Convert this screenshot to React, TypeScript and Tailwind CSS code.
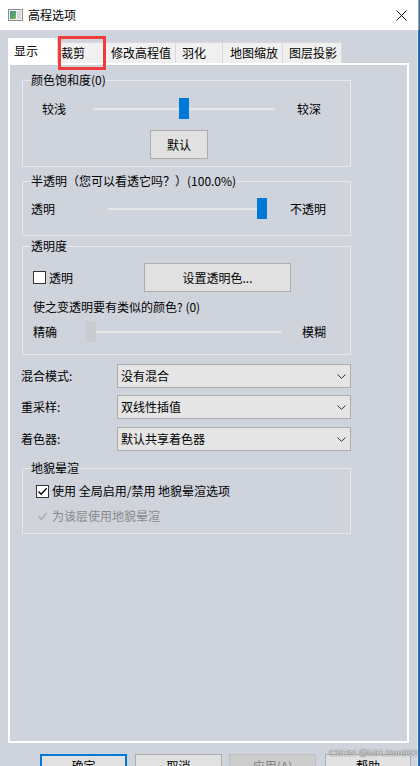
import React from "react";

function Check({ color = "#000" }: { color?: string }) {
  return (
    <svg width="11" height="11" viewBox="0 0 11 11">
      <polyline points="1.5,5.5 4.2,8.3 9.6,2.3" fill="none" stroke={color} strokeWidth="1.3" />
    </svg>
  );
}

function Chevron() {
  return (
    <svg width="9" height="5" viewBox="0 0 9 5">
      <polyline points="0.5,0.5 4.5,4.3 8.5,0.5" fill="none" stroke="#333" strokeWidth="1" />
    </svg>
  );
}

function Combo({ label, value, mt }: { label: string; value: string; mt: string }) {
  return (
    <div className={`flex items-center h-[24px] -ml-[1px] ${mt}`}>
      <div className="w-[96px] leading-[16px]">{label}</div>
      <div className="w-[234px] h-[24px] border border-[#adadad] bg-[#e5e5e5] flex items-center pl-[3px] pr-[4px]">
        <span className="flex-1 leading-[16px]">{value}</span>
        <Chevron />
      </div>
    </div>
  );
}

export default function App() {
  return (
    <div className="w-[420px] h-[766px] overflow-hidden relative flex bg-[#cfd3dc] text-[12px] text-black font-['Noto_Sans_CJK_SC','Microsoft_YaHei',sans-serif]">
      <div className="w-[417px] flex flex-col">
        {/* Title bar */}
        <div className="h-[30px] bg-white flex items-center shrink-0">
          <svg className="ml-[8px]" width="15" height="12" viewBox="0 0 15 12">
            <defs>
              <linearGradient id="g" x1="0" y1="0" x2="1" y2="1">
                <stop offset="0" stopColor="#3a8fa8" />
                <stop offset="0.6" stopColor="#5aa66a" />
                <stop offset="1" stopColor="#8fbf5a" />
              </linearGradient>
            </defs>
            <rect x="0.5" y="0.5" width="14" height="11" fill="#f2f2f2" stroke="#8c8c8c" />
            <rect x="2" y="2" width="6" height="8" fill="url(#g)" />
            <rect x="9" y="2" width="4" height="8" fill="#d8d8d8" />
          </svg>
          <span className="ml-[5px] leading-[16px]">高程选项</span>
          <div className="flex-1" />
          <svg className="mr-[10px]" width="11" height="11" viewBox="0 0 11 11">
            <line x1="0.5" y1="0.5" x2="10.5" y2="10.5" stroke="#111" strokeWidth="1" />
            <line x1="10.5" y1="0.5" x2="0.5" y2="10.5" stroke="#111" strokeWidth="1" />
          </svg>
        </div>

        {/* Tabs */}
        <div className="h-[33px] flex items-end pl-[8px] shrink-0">
          <div className="w-[49px] h-[25px] bg-white flex items-center pl-[6px] leading-[16px]">显示</div>
          <div className="w-[49px] h-[21px] bg-[#f0f0f0] border border-b-0 border-[#d9d9d9] flex items-center pl-[3px] leading-[16px]">裁剪</div>
          <div className="w-[70px] h-[21px] bg-[#f0f0f0] border border-b-0 border-l-0 border-[#d9d9d9] flex items-center pl-[5px] leading-[16px]">修改高程值</div>
          <div className="w-[47px] h-[21px] bg-[#f0f0f0] border border-b-0 border-l-0 border-[#d9d9d9] flex items-center pl-[6px] leading-[16px]">羽化</div>
          <div className="w-[60px] h-[21px] bg-[#f0f0f0] border border-b-0 border-l-0 border-[#d9d9d9] flex items-center pl-[7px] leading-[16px]">地图缩放</div>
          <div className="w-[59px] h-[21px] bg-[#f0f0f0] border border-b-0 border-l-0 border-[#d9d9d9] flex items-center pl-[6px] leading-[16px]">图层投影</div>
        </div>

        {/* Panel */}
        <div className="ml-[8px] w-[401px] h-[680px] shrink-0 border-2 border-white flex flex-col pl-[12px] pt-[7px]">
          {/* Group 1 */}
          <fieldset className="w-[329px] border border-[#e6e8ec] px-[8px] pb-[7px]">
            <legend className="leading-[16px]">颜色饱和度(0)</legend>
            <div className="mt-[10px] h-[21px] flex items-center">
              <div className="ml-[11px] w-[51px] leading-[16px]">较浅</div>
              <div className="relative w-[182px] h-[2px] bg-[#e8e8e8]">
                <div className="absolute left-[86px] top-[-10px] w-[10px] h-[21px] bg-[#0078d7]" />
              </div>
              <div className="ml-[22px] leading-[16px]">较深</div>
            </div>
            <div className="mt-[11px] flex">
              <div className="ml-[119px] w-[58px] h-[29px] border border-[#adadad] bg-[#e1e1e1] flex items-center justify-center leading-[16px]">默认</div>
            </div>
          </fieldset>

          {/* Group 2 */}
          <fieldset className="mt-[6px] w-[329px] border border-[#e6e8ec] px-[8px] pb-[16px]">
            <legend className="leading-[16px]">半透明（您可以看透它吗？）(100.0%)</legend>
            <div className="mt-[9px] h-[21px] flex items-center">
              <div className="w-[77px] leading-[16px]">透明</div>
              <div className="relative w-[159px] h-[2px] bg-[#e8e8e8]">
                <div className="absolute left-[149px] top-[-10px] w-[10px] h-[21px] bg-[#0078d7]" />
              </div>
              <div className="ml-[23px] leading-[16px]">不透明</div>
            </div>
          </fieldset>

          {/* Group 3 */}
          <fieldset className="mt-[2px] w-[329px] border border-[#e6e8ec] px-[8px] pb-[12px]">
            <legend className="leading-[16px]">透明度</legend>
            <div className="mt-[9px] h-[29px] flex items-center">
              <div className="w-[113px] flex items-center">
                <div className="ml-[2px] w-[13px] h-[13px] border border-[#333] bg-white" />
                <span className="ml-[3px] leading-[16px]">透明</span>
              </div>
              <div className="w-[147px] h-[29px] border border-[#adadad] bg-[#e1e1e1] flex items-center justify-center leading-[16px]">设置透明色...</div>
            </div>
            <div className="mt-[7px] ml-[2px] h-[16px] leading-[16px]">使之变透明要有类似的颜色? (0)</div>
            <div className="mt-[6px] h-[21px] flex items-center">
              <div className="ml-[2px] w-[53px] leading-[16px]">精确</div>
              <div className="relative w-[195px] h-[2px] bg-[#e8e8e8]">
                <div className="absolute left-0 top-[-10px] w-[10px] h-[21px] bg-[#c9cbcf]" />
              </div>
              <div className="ml-[21px] leading-[16px]">模糊</div>
            </div>
          </fieldset>

          <Combo label="混合模式:" value="没有混合" mt="mt-[9px]" />
          <Combo label="重采样:" value="双线性插值" mt="mt-[7px]" />
          <Combo label="着色器:" value="默认共享着色器" mt="mt-[8px]" />

          {/* Group 4 */}
          <fieldset className="mt-[9px] w-[329px] border border-[#e6e8ec] px-[8px] pb-[9px]">
            <legend className="leading-[16px]">地貌晕渲</legend>
            <div className="mt-[7px] h-[16px] flex items-center">
              <div className="ml-[5px] w-[13px] h-[13px] border border-[#333] bg-white flex items-center justify-center">
                <Check />
              </div>
              <span className="ml-[3px] leading-[16px]">使用 全局启用/禁用 地貌晕渲选项</span>
            </div>
            <div className="mt-[9px] h-[16px] flex items-center">
              <div className="ml-[5px] w-[13px] h-[13px] border border-[#d3d5da] flex items-center justify-center">
                <Check color="#a8a8a8" />
              </div>
              <span className="ml-[3px] leading-[16px] text-[#8a8a8a]">为该层使用地貌晕渲</span>
            </div>
          </fieldset>
        </div>

        {/* Bottom buttons */}
        <div className="mt-[11px] flex shrink-0">
          <div className="ml-[40px] w-[87px] h-[23px] border-2 border-[#0078d7] bg-[#e1e1e1] flex items-center justify-center leading-[16px]">确定</div>
          <div className="ml-[8px] w-[87px] h-[23px] border border-[#adadad] bg-[#e1e1e1] flex items-center justify-center leading-[16px]">取消</div>
          <div className="ml-[7px] w-[87px] h-[23px] border border-[#bfbfbf] bg-[#cccccc] flex items-center justify-center leading-[16px] text-[#838383]">应用(A)</div>
          <div className="ml-[9px] w-[86px] h-[23px] border border-[#adadad] bg-[#e1e1e1] flex items-center justify-center leading-[16px]">帮助</div>
        </div>
      </div>

      {/* Right window edge */}
      <div className="w-[3px] flex flex-col">
        <div className="h-[30px] flex">
          <div className="w-[1px] bg-white" />
          <div className="w-[1px] bg-[#a0a0a0]" />
          <div className="w-[1px] bg-[#2a78c2]" />
        </div>
        <div className="flex-1 flex">
          <div className="w-[1px] bg-[#e4e6ea]" />
          <div className="w-[2px] bg-[#1c6db8]" />
        </div>
      </div>

      {/* Red annotation box */}
      <div className="absolute left-[58px] top-[36px] w-[48px] h-[34px] border-[3px] border-[#ee3b3b]" />

      {/* Watermark */}
      <div className="absolute left-[329px] top-[747px] whitespace-nowrap text-[9.5px] leading-[12px] font-['Liberation_Sans',sans-serif] text-[#e9e9e9] [text-shadow:0_0_1px_#555,0_0_1px_#555]">CSDN @MR.Sun961</div>
    </div>
  );
}
